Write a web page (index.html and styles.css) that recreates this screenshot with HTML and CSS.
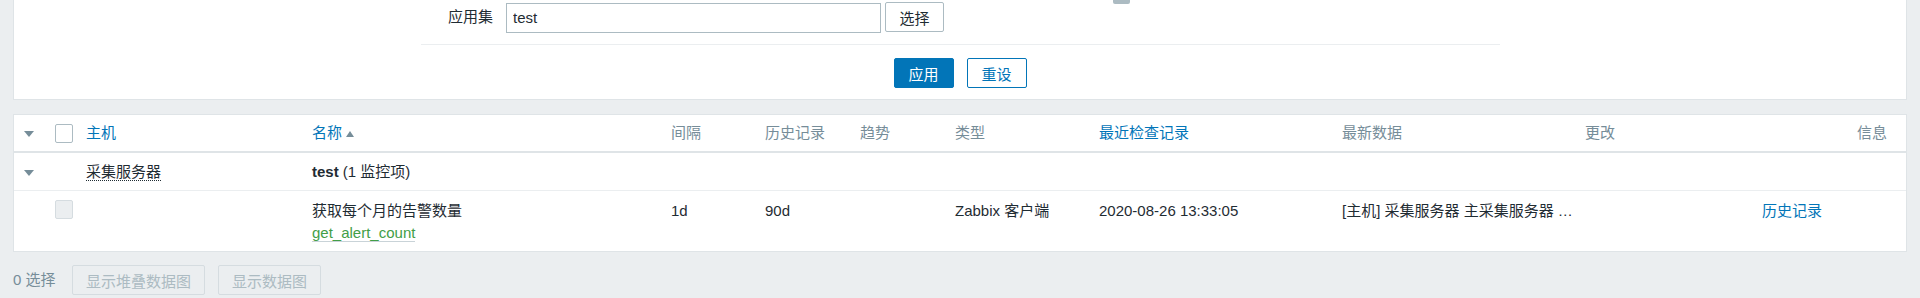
FILE: index.html
```html
<!DOCTYPE html>
<html>
<head>
  <meta charset="utf-8">
  <meta name="viewport" content="width=device-width, initial-scale=1.0">
  <link rel="stylesheet" href="styles.css">
</head>
<body>
  <div class="filter">
    <div class="filter-row">
      <label class="filter-label">应用集</label>
      <input class="text-input" type="text" value="test">
      <button class="btn-grey">选择</button>
      <span class="cut-box"></span>
    </div>
    <div class="filter-sep"></div>
    <div class="filter-buttons">
      <button class="btn">应用</button>
      <button class="btn-alt">重设</button>
    </div>
  </div>

  <table class="list-table">
    <colgroup>
      <col style="width:35px">
      <col style="width:31px">
      <col style="width:226px">
      <col style="width:359px">
      <col style="width:94px">
      <col style="width:95px">
      <col style="width:95px">
      <col style="width:144px">
      <col style="width:243px">
      <col style="width:243px">
      <col style="width:177px">
      <col style="width:94px">
      <col style="width:56px">
    </colgroup>
    <thead>
      <tr>
        <th class="toggle-cell"><span class="arrow-down"></span></th>
        <th><span class="checkbox"></span></th>
        <th><a class="link">主机</a></th>
        <th><a class="link">名称</a><span class="arrow-up"></span></th>
        <th>间隔</th>
        <th>历史记录</th>
        <th>趋势</th>
        <th>类型</th>
        <th><a class="link">最近检查记录</a></th>
        <th>最新数据</th>
        <th>更改</th>
        <th></th>
        <th class="info-cell">信息</th>
      </tr>
    </thead>
    <tbody>
      <tr class="group-row">
        <td class="toggle-cell"><span class="arrow-down"></span></td>
        <td></td>
        <td><span class="link-action">采集服务器</span></td>
        <td colspan="10"><b>test</b> (1 监控项)</td>
      </tr>
      <tr class="item-row">
        <td></td>
        <td><span class="checkbox disabled"></span></td>
        <td></td>
        <td>
          <div>获取每个月的告警数量</div>
          <div><span class="item-key">get_alert_count</span></div>
        </td>
        <td>1d</td>
        <td>90d</td>
        <td></td>
        <td>Zabbix 客户端</td>
        <td>2020-08-26 13:33:05</td>
        <td>[主机] 采集服务器 主采集服务器 …</td>
        <td></td>
        <td><a class="link">历史记录</a></td>
        <td></td>
      </tr>
    </tbody>
  </table>

  <div class="action-buttons">
    <span class="selected-count">0 选择</span>
    <button class="btn-disabled" disabled>显示堆叠数据图</button>
    <button class="btn-disabled" disabled>显示数据图</button>
  </div>
</body>
</html>
```

FILE: styles.css
```css
* {
  margin: 0;
  padding: 0;
  box-sizing: border-box;
}

body {
  background: #ebeef0;
  color: #1f2c33;
  font-family: "Liberation Sans", "Noto Sans CJK SC", sans-serif;
  font-size: 15px;
  line-height: 18px;
  height: 298px;
  overflow: hidden;
}

button,
input {
  font-family: inherit;
  font-size: 15px;
}

/* filter */
.filter {
  margin: 0 13px;
  background: #fff;
  border: 1px solid #dfe4e7;
  border-top: none;
  padding-bottom: 11px;
}

.filter-row {
  display: flex;
  align-items: center;
  padding-top: 2px;
  height: 32px;
}

.filter-label {
  width: 479px;
  text-align: right;
  margin-right: 13px;
}

.text-input {
  width: 375px;
  height: 30px;
  border: 1px solid #acbbc2;
  padding: 0 6px;
  color: #1f2c33;
  outline: none;
  margin-top: 1px;
}

.btn-grey {
  height: 30px;
  width: 59px;
  margin-left: 4px;
  background: #fff;
  border: 1px solid #acbbc2;
  border-radius: 2px;
  color: #1f2c33;
}

.cut-box {
  align-self: flex-start;
  margin-top: -2px;
  margin-left: 169px;
  width: 17px;
  height: 4px;
  background: #acbbc2;
  border-radius: 0 0 2px 2px;
}

.filter-sep {
  width: 1079px;
  height: 1px;
  margin: 12px auto 0;
  background: #ebeef0;
}

.filter-buttons {
  display: flex;
  justify-content: center;
  gap: 13px;
  margin-top: 13px;
}

.btn,
.btn-alt {
  width: 60px;
  height: 30px;
  border: 1px solid #0275b8;
  border-radius: 2px;
}

.btn {
  background: #0275b8;
  color: #fff;
}

.btn-alt {
  background: #fff;
  color: #0275b8;
}

/* table */
.list-table {
  width: 1894px;
  margin: 14px 13px 0;
  table-layout: fixed;
  border-collapse: separate;
  border-spacing: 0;
  background: #fff;
  border: 1px solid #dfe4e7;
}

.list-table th {
  height: 38px;
  padding: 0 6px;
  text-align: left;
  font-weight: normal;
  color: #768d99;
  white-space: nowrap;
  border-bottom: 2px solid #dfe4e7;
  vertical-align: middle;
}

.list-table td {
  padding: 0 6px;
  white-space: nowrap;
  overflow: hidden;
}

.list-table .toggle-cell {
  padding-left: 10px;
}

.list-table .info-cell {
  text-align: right;
  padding-right: 19px;
}

.group-row td {
  height: 38px;
  border-bottom: 1px solid #ebeef0;
  vertical-align: middle;
}

.item-row td {
  height: 60px;
  vertical-align: top;
  padding-top: 9px;
  line-height: 22px;
}

.link {
  color: #0275b8;
  text-decoration: none;
}

.link-action {
  border-bottom: 1px dotted #1f2c33;
}

.item-key {
  color: #429e47;
  border-bottom: 1px solid #c9d3d8;
}

.arrow-down {
  display: inline-block;
  width: 0;
  height: 0;
  border-left: 5.5px solid transparent;
  border-right: 5.5px solid transparent;
  border-top: 6px solid #768d99;
  vertical-align: middle;
}

.arrow-up {
  display: inline-block;
  width: 0;
  height: 0;
  margin-left: 4px;
  border-left: 4.5px solid transparent;
  border-right: 4.5px solid transparent;
  border-bottom: 6px solid #768d99;
  vertical-align: middle;
}

.checkbox {
  display: block;
  width: 18px;
  height: 19px;
  background: #fff;
  border: 1px solid #acbbc2;
  border-radius: 2px;
}

.checkbox.disabled {
  background: #ebeef0;
  border-color: #d5dce0;
}

/* footer */
.action-buttons {
  display: flex;
  align-items: center;
  margin: 13px 13px 0;
}

.selected-count {
  color: #768d99;
  margin-right: 16px;
  min-width: 43px;
}

.btn-disabled {
  height: 30px;
  padding: 0 13px;
  margin-right: 13px;
  background: #ebeef0;
  border: 1px solid #d5dce0;
  border-radius: 2px;
  color: #acbbc2;
}
```
